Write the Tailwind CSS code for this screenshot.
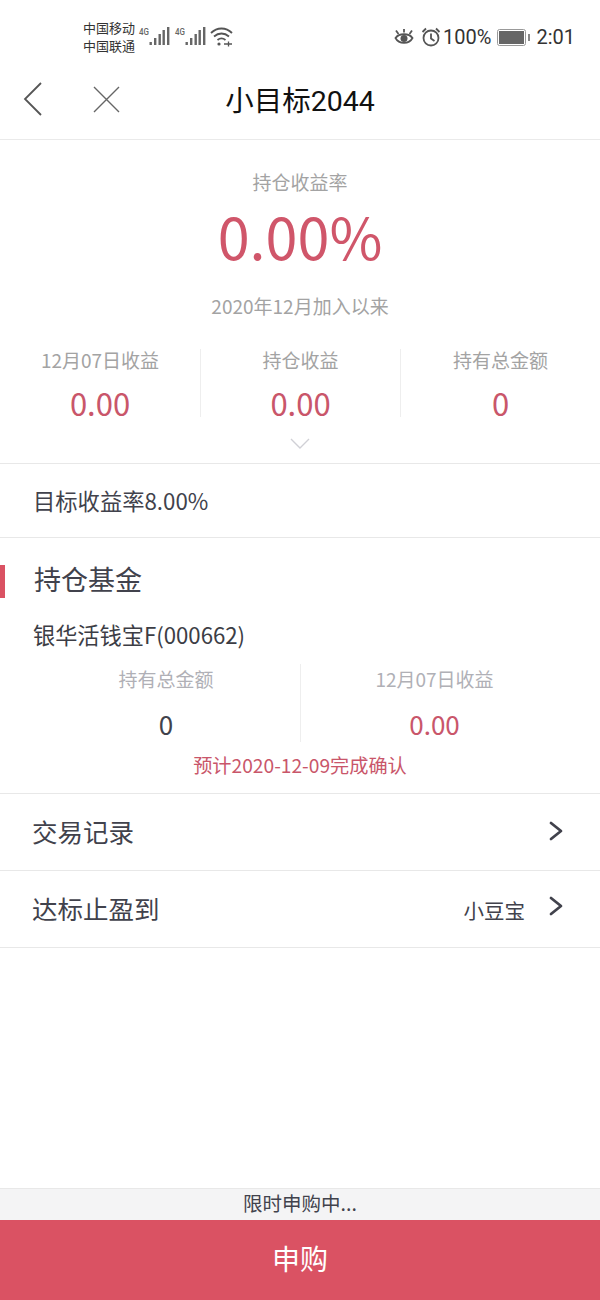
<!DOCTYPE html>
<html lang="zh">
<head>
    <meta charset="UTF-8">
    <meta name="viewport" content="width=device-width, initial-scale=1.0">
    <title>小目标2044</title>
    <script src="https://cdn.jsdelivr.net/npm/@tailwindcss/browser@4"></script>
</head>
<body class="bg-white font-['Noto_Sans_CJK_SC','Roboto',sans-serif] text-[#41424c]">
<div class="flex flex-col w-[600px] h-[1300px] overflow-hidden">
    <!-- status bar -->
    <div class="flex items-center h-[70px] pt-[4px] pl-[83px] pr-[25px] text-[#333] font-['Roboto','Noto_Sans_CJK_SC',sans-serif]">
        <div class="flex flex-col text-[13px] leading-[18px] w-[55px] mt-[1px] whitespace-nowrap">
            <span>中国移动</span>
            <span>中国联通</span>
        </div>
        <svg width="32" height="24" viewBox="0 0 32 24" fill="#666">
            <text x="1" y="10" font-size="9.500" font-weight="500" font-family="Roboto" textLength="10" lengthAdjust="spacingAndGlyphs">4G</text>
            <rect x="11.500" y="17" width="2.400" height="3"/><rect x="16" y="13" width="2.400" height="7"/><rect x="20.500" y="9" width="2.400" height="11"/><rect x="24.500" y="5" width="2.400" height="15"/><rect x="29" y="2" width="2.400" height="18"/>
        </svg>
        <svg class="ml-[4px]" width="32" height="24" viewBox="0 0 32 24" fill="#666">
            <text x="1" y="10" font-size="9.500" font-weight="500" font-family="Roboto" textLength="10" lengthAdjust="spacingAndGlyphs">4G</text>
            <rect x="11.500" y="17" width="2.400" height="3"/><rect x="16" y="13" width="2.400" height="7"/><rect x="20.500" y="9" width="2.400" height="11"/><rect x="24.500" y="5" width="2.400" height="15"/><rect x="29" y="2" width="2.400" height="18"/>
        </svg>
        <svg class="ml-[4px]" width="24" height="20" viewBox="0 0 24 20" fill="none" stroke="#555" stroke-width="1.800">
            <path d="M1 6C7 0 16 0 22 6"/><path d="M4 9.500C8.500 5.500 14.500 5.500 19 9.500"/><path d="M7.500 13C10 11 13 11 15.500 13"/>
            <circle cx="9" cy="17" r="1.600" fill="#555" stroke="none"/><path d="M14 17H22M18.500 14.500V19.500" stroke-width="1.300"/>
        </svg>
        <div class="flex-1"></div>
        <svg width="20" height="20" viewBox="0 0 20 20" fill="none" stroke="#555" stroke-width="1.800">
            <path d="M1.500 11C5 6 15 6 18.500 11C15 17.500 5 17.500 1.500 11Z"/><circle cx="10" cy="11.500" r="3.500" fill="#555" stroke="none"/>
            <path d="M2 3.500L4.500 7M10 2V5.500M18 3.500L15.500 7"/>
        </svg>
        <svg class="ml-[7px]" width="20" height="20" viewBox="0 0 20 20" fill="none" stroke="#555" stroke-width="1.800">
            <circle cx="10" cy="11" r="7.500"/><path d="M10 6.500V11.500L13.500 14"/><path d="M1.500 5L5 1.500M18.500 5L15 1.500"/>
        </svg>
        <span class="ml-[2px] text-[20px] text-[#333]">100%</span>
        <svg class="ml-[6px]" width="33" height="17" viewBox="0 0 33 17">
            <rect x="0.500" y="0.500" width="28" height="16" rx="2" fill="none" stroke="#999"/>
            <rect x="2" y="2" width="25" height="13" fill="#666"/>
            <rect x="31" y="5" width="2" height="7" fill="#888"/>
        </svg>
        <span class="ml-[6px] text-[20px] text-[#333]">2:01</span>
    </div>

    <!-- nav -->
    <div class="relative flex items-center justify-center h-[70px] border-b border-[#eaeaea]">
        <svg class="absolute left-[22px] top-[10px]" width="22" height="36" viewBox="0 0 22 36" fill="none" stroke="#555" stroke-width="1.800">
            <path d="M19 3L3 19L19 35"/>
        </svg>
        <svg class="absolute left-[92px] top-[15px]" width="30" height="30" viewBox="0 0 30 30" fill="none" stroke="#666" stroke-width="1.400">
            <path d="M2 2L27 27M27 2L2 27"/>
        </svg>
        <span class="text-[28.500px] leading-[38px] text-[#111] mb-[6px] font-['Roboto','Noto_Sans_CJK_SC',sans-serif]">小目标2044</span>
    </div>

    <!-- summary -->
    <div class="flex flex-col items-center pt-[29px] h-[324px] border-b border-[#e8e8e8]">
        <p class="text-[19px] leading-[26px] text-[#a3a3a3]">持仓收益率</p>
        <p class="text-[57.500px] leading-[70px] text-[#d0566a] mt-[5px]">0.00%</p>
        <p class="text-[19px] leading-[26px] text-[#a3a3a3] mt-[23px]">2020年12月加入以来</p>
        <div class="grid grid-cols-3 w-full mt-[30px] h-[68px]">
            <div class="flex flex-col items-center">
                <span class="text-[19px] leading-[22px] text-[#a3a3a3]">12月07日收益</span>
                <span class="text-[31px] leading-[22px] text-[#c9566a] mt-[21px]">0.00</span>
            </div>
            <div class="flex flex-col items-center border-l border-[#eeeeee]">
                <span class="text-[19px] leading-[22px] text-[#a3a3a3]">持仓收益</span>
                <span class="text-[31px] leading-[22px] text-[#c9566a] mt-[21px]">0.00</span>
            </div>
            <div class="flex flex-col items-center border-l border-[#eeeeee]">
                <span class="text-[19px] leading-[22px] text-[#a3a3a3]">持有总金额</span>
                <span class="text-[31px] leading-[22px] text-[#c9566a] mt-[21px]">0</span>
            </div>
        </div>
        <svg class="mt-[21px]" width="20" height="12" viewBox="0 0 20 12" fill="none" stroke="#d0d0d6" stroke-width="1.400">
            <path d="M1 1L10 10L19 1"/>
        </svg>
    </div>

    <div class="flex items-center h-[74px] pl-[33px] text-[22.300px] border-b border-[#e8e8e8]">目标收益率8.00%</div>

    <!-- funds -->
    <div class="relative flex flex-col h-[256px] border-b border-[#e8e8e8]">
        <div class="absolute left-0 top-[27px] w-[5px] h-[33px] bg-[#da5263]"></div>
        <p class="pl-[34px] pt-[23px] text-[27px] leading-[36px]">持仓基金</p>
        <p class="pl-[33px] mt-[23px] text-[22.200px] leading-[28px] text-[#3c3d45]">银华活钱宝F(000662)</p>
        <div class="grid grid-cols-2 px-[32px] mt-[16px] h-[78px]">
            <div class="flex flex-col items-center">
                <span class="text-[19px] leading-[30px] text-[#b0b0b6]">持有总金额</span>
                <span class="text-[26px] leading-[32px] mt-[14px]">0</span>
            </div>
            <div class="flex flex-col items-center border-l border-[#eeeeee]">
                <span class="text-[19px] leading-[30px] text-[#b0b0b6]">12月07日收益</span>
                <span class="text-[26px] leading-[32px] text-[#c9566a] mt-[14px]">0.00</span>
            </div>
        </div>
        <p class="text-center text-[19.200px] leading-[26px] text-[#c9566a] mt-[10px]">预计2020-12-09完成确认</p>
    </div>

    <!-- rows -->
    <div class="flex items-center justify-between h-[77px] pl-[32px] pr-[37px] text-[25.500px] border-b border-[#e8e8e8]">
        <span class="-mt-[2px]">交易记录</span>
        <svg class="mb-[2px]" width="14" height="20" viewBox="0 0 14 20" fill="none" stroke="#41424c" stroke-width="2.800" stroke-linecap="round" stroke-linejoin="round">
            <path d="M2 2L12 10L2 18"/>
        </svg>
    </div>
    <div class="flex items-center h-[77px] pl-[32px] pr-[37px] text-[25.500px] border-b border-[#e8e8e8]">
        <span class="-mt-[2px]">达标止盈到</span>
        <span class="ml-auto mr-[24px] mt-[2px] text-[20.500px]">小豆宝</span>
        <svg class="mb-[6px]" width="14" height="20" viewBox="0 0 14 20" fill="none" stroke="#41424c" stroke-width="2.800" stroke-linecap="round" stroke-linejoin="round">
            <path d="M2 2L12 10L2 18"/>
        </svg>
    </div>

    <div class="flex-1"></div>

    <!-- bottom -->
    <div class="flex items-center justify-center h-[32px] pb-[3px] bg-[#f4f4f5] border-t border-[#e8e8e8] text-[19.500px]">限时申购中...</div>
    <div class="flex items-center justify-center h-[80px] pb-[5px] bg-[#da5263] text-white text-[28px]">申购</div>
</div>
</body>
</html>
